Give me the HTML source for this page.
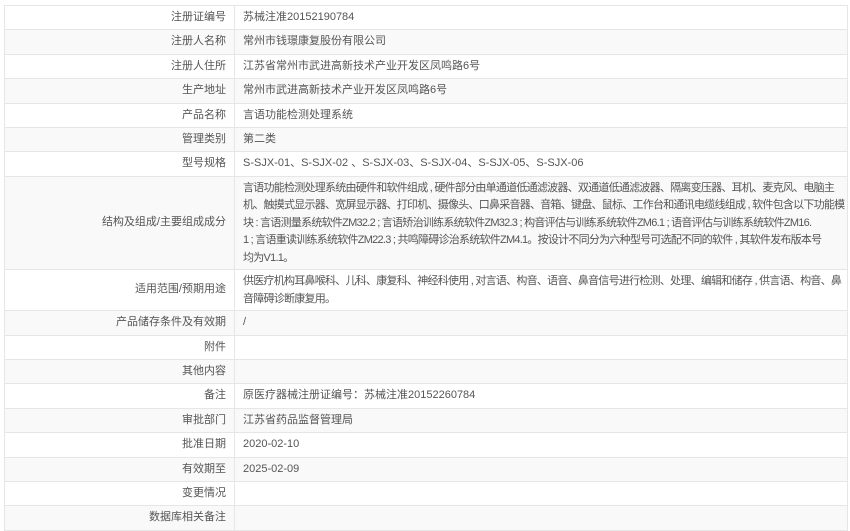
<!DOCTYPE html>
<html><head><meta charset="utf-8"><style>
body{margin:0;background:#fff;font-family:"Liberation Sans","Noto Sans CJK SC",sans-serif;font-size:11px;color:#555;}
table{position:absolute;left:4px;top:5px;width:844px;border-collapse:collapse;table-layout:fixed;}
td{border:1px solid #e6e6e6;height:23.4px;padding:0 8px;line-height:17.5px;vertical-align:middle;}
td.l{width:213px;text-align:right;}
tr:nth-child(even) td{background:#f9f9f9;}
td.m{padding:3px 8px 2px;height:auto;white-space:nowrap;letter-spacing:-0.75px;overflow:hidden;}
</style></head><body>
<table>
<tr><td class="l">注册证编号</td><td>苏械注准20152190784</td></tr>
<tr><td class="l">注册人名称</td><td>常州市钱璟康复股份有限公司</td></tr>
<tr><td class="l">注册人住所</td><td>江苏省常州市武进高新技术产业开发区凤鸣路6号</td></tr>
<tr><td class="l">生产地址</td><td>常州市武进高新技术产业开发区凤鸣路6号</td></tr>
<tr><td class="l">产品名称</td><td>言语功能检测处理系统</td></tr>
<tr><td class="l">管理类别</td><td>第二类</td></tr>
<tr><td class="l">型号规格</td><td>S-SJX-01、S-SJX-02 、S-SJX-03、S-SJX-04、S-SJX-05、S-SJX-06</td></tr>
<tr><td class="l">结构及组成/主要组成成分</td><td class="m">言语功能检测处理系统由硬件和软件组成 , 硬件部分由单通道低通滤波器、双通道低通滤波器、隔离变压器、耳机、麦克风、电脑主<br>机、触摸式显示器、宽屏显示器、打印机、摄像头、口鼻采音器、音箱、键盘、鼠标、工作台和通讯电缆线组成 , 软件包含以下功能模<br>块 : 言语测量系统软件ZM32.2 ; 言语矫治训练系统软件ZM32.3 ; 构音评估与训练系统软件ZM6.1 ; 语音评估与训练系统软件ZM16.<br>1 ; 言语重读训练系统软件ZM22.3 ; 共鸣障碍诊治系统软件ZM4.1。按设计不同分为六种型号可选配不同的软件 , 其软件发布版本号<br>均为V1.1。</td></tr>
<tr><td class="l">适用范围/预期用途</td><td class="m">供医疗机构耳鼻喉科、儿科、康复科、神经科使用 , 对言语、构音、语音、鼻音信号进行检测、处理、编辑和储存 , 供言语、构音、鼻<br>音障碍诊断康复用。</td></tr>
<tr><td class="l">产品储存条件及有效期</td><td>/</td></tr>
<tr><td class="l">附件</td><td></td></tr>
<tr><td class="l">其他内容</td><td></td></tr>
<tr><td class="l">备注</td><td>原医疗器械注册证编号：苏械注准20152260784</td></tr>
<tr><td class="l">审批部门</td><td>江苏省药品监督管理局</td></tr>
<tr><td class="l">批准日期</td><td>2020-02-10</td></tr>
<tr><td class="l">有效期至</td><td>2025-02-09</td></tr>
<tr><td class="l">变更情况</td><td></td></tr>
<tr><td class="l">数据库相关备注</td><td></td></tr>
</table>
</body></html>
